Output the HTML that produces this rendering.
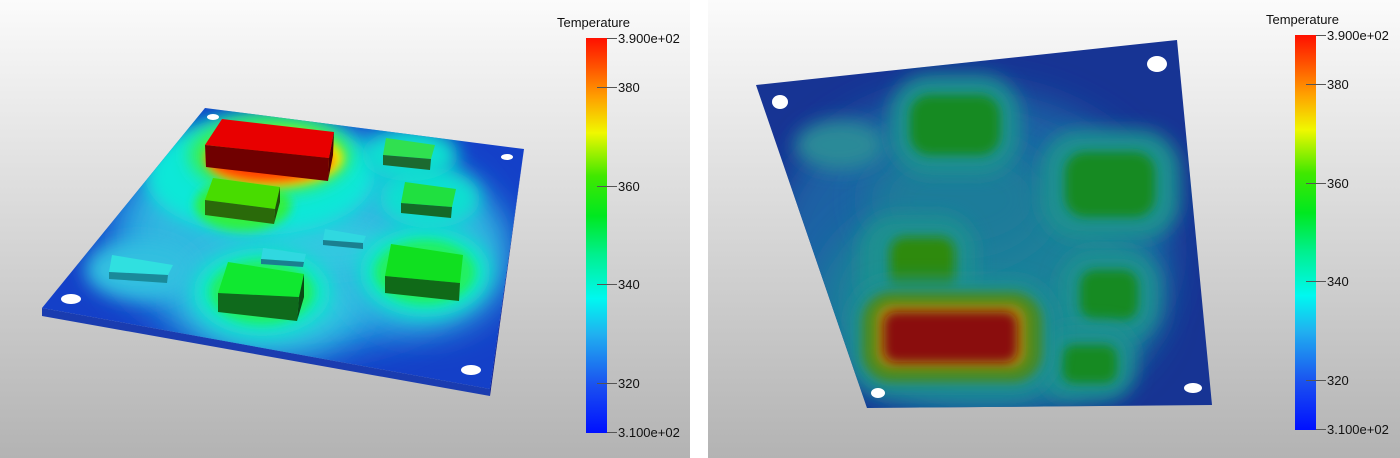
<!DOCTYPE html>
<html><head><style>
html,body{margin:0;padding:0;background:#fff;}
svg{display:block;font-family:"Liberation Sans",sans-serif;}
</style></head><body>
<svg width="1400" height="458" viewBox="0 0 1400 458" xmlns="http://www.w3.org/2000/svg">
<defs>
<linearGradient id="bg" x1="0" y1="0" x2="0" y2="1">
<stop offset="0" stop-color="#fbfbfb"/><stop offset="1" stop-color="#b3b3b3"/></linearGradient>
<linearGradient id="cb" x1="0" y1="1" x2="0" y2="0">
<stop offset="0" stop-color="#0010ff"/><stop offset="0.12" stop-color="#1a50f0"/>
<stop offset="0.25" stop-color="#20b0f0"/><stop offset="0.34" stop-color="#00f8f0"/>
<stop offset="0.45" stop-color="#00f090"/><stop offset="0.55" stop-color="#00e820"/>
<stop offset="0.65" stop-color="#40e800"/><stop offset="0.76" stop-color="#f0f800"/>
<stop offset="0.85" stop-color="#ffa000"/><stop offset="0.93" stop-color="#ff5000"/>
<stop offset="1" stop-color="#ff1000"/></linearGradient>
<filter id="b1" x="-50%" y="-50%" width="200%" height="200%"><feGaussianBlur stdDeviation="18"/></filter>
<filter id="b2" x="-50%" y="-50%" width="200%" height="200%"><feGaussianBlur stdDeviation="9"/></filter>
<filter id="b3" x="-50%" y="-50%" width="200%" height="200%"><feGaussianBlur stdDeviation="5"/></filter>
<clipPath id="lp"><polygon points="205,108 524,149 490,389 42,308"/></clipPath>
<clipPath id="rp"><polygon points="756,85 1177,40 1212,405 867,408"/></clipPath>
</defs>
<rect x="0" y="0" width="690" height="458" fill="url(#bg)"/>
<rect x="708" y="0" width="692" height="458" fill="url(#bg)"/>

<polygon points="42,308 490,389 490,396 42,316" fill="#1a3cb0"/>
<polygon points="524,149 490,389 490,396 523,156" fill="#0a1a90"/>
<polygon points="205,108 524,149 490,389 42,308" fill="#1440c8"/>
<g clip-path="url(#lp)">
<ellipse cx="300" cy="240" rx="190" ry="110" fill="#2090e0" filter="url(#b1)"/>
<ellipse cx="280" cy="230" rx="150" ry="90" fill="#30b8e0" filter="url(#b1)"/>
<ellipse cx="270" cy="300" rx="90" ry="55" fill="#30c8e0" filter="url(#b1)"/>
<ellipse cx="425" cy="255" rx="85" ry="75" fill="#30b8e0" filter="url(#b1)"/>
<ellipse cx="140" cy="270" rx="55" ry="30" fill="#30c0e0" filter="url(#b2)"/>
<ellipse cx="330" cy="245" rx="60" ry="25" fill="#30c8e0" filter="url(#b2)"/>
<ellipse cx="260" cy="175" rx="115" ry="60" fill="#10e8d8" filter="url(#b2)"/>
<ellipse cx="262" cy="292" rx="68" ry="44" fill="#10e8c8" filter="url(#b2)"/>
<ellipse cx="425" cy="272" rx="65" ry="45" fill="#10e8c8" filter="url(#b2)"/>
<ellipse cx="430" cy="198" rx="50" ry="30" fill="#10e0d0" filter="url(#b2)"/>
<ellipse cx="410" cy="155" rx="48" ry="26" fill="#10e0d0" filter="url(#b2)"/>
<ellipse cx="262" cy="292" rx="52" ry="32" fill="#20f060" filter="url(#b3)"/>
<ellipse cx="425" cy="272" rx="50" ry="32" fill="#20f060" filter="url(#b3)"/>
<ellipse cx="243" cy="205" rx="48" ry="26" fill="#30f040" filter="url(#b3)"/>
<ellipse cx="270" cy="155" rx="80" ry="38" fill="#40f040" filter="url(#b2)"/>
<ellipse cx="275" cy="158" rx="68" ry="28" fill="#ffe800" filter="url(#b3)"/>
<ellipse cx="270" cy="160" rx="62" ry="22" fill="#ff4000" filter="url(#b3)"/>
</g>
<ellipse cx="213" cy="117" rx="6" ry="3" fill="#fff"/>
<ellipse cx="507" cy="157" rx="6" ry="3" fill="#fff"/>
<ellipse cx="71" cy="299" rx="10" ry="5" fill="#fff"/>
<ellipse cx="471" cy="370" rx="10" ry="5" fill="#fff"/>

<g>
<polygon points="222,119 334,132 329,158 205,145" fill="#e80000"/>
<polygon points="205,145 329,158 328,181 206,167" fill="#700000"/>
<polygon points="334,132 329,158 328,181 333,155" fill="#500000"/>
<polygon points="213,178 280,187 275,209 205,200" fill="#48dc00"/>
<polygon points="205,200 275,209 274,224 205,215" fill="#2a6a0a"/>
<polygon points="280,187 275,209 274,224 280,202" fill="#1f5008"/>
<polygon points="386,138 435,145 431,159 383,155" fill="#30e050"/>
<polygon points="383,155 431,159 430,170 383,165" fill="#1c6a30"/>
<polygon points="405,182 456,189 452,207 401,203" fill="#20e040"/>
<polygon points="401,203 452,207 451,218 401,213" fill="#146a28"/>
<polygon points="391,244 463,255 460,283 385,276" fill="#10e020"/>
<polygon points="385,276 460,283 459,301 385,293" fill="#106a18"/>
<polygon points="228,262 304,274 299,297 218,293" fill="#10e830"/>
<polygon points="218,293 299,297 297,321 218,312" fill="#0f6a1c"/>
<polygon points="304,274 299,297 297,321 304,297" fill="#0a4a14"/>
<polygon points="112,255 173,265 168,275 109,272" fill="#30e0e0"/>
<polygon points="109,272 168,275 167,283 109,279" fill="#1a8a9a"/>
<polygon points="263,248 306,254 304,262 261,259" fill="#30d8e0"/>
<polygon points="261,259 304,262 303,267 261,264" fill="#1a8090"/>
<polygon points="325,229 366,236 363,243 323,240" fill="#30d8e0"/>
<polygon points="323,240 363,243 363,249 323,245" fill="#1a8090"/>
</g>

<polygon points="756,85 1177,40 1212,405 867,408" fill="#173494"/>
<g clip-path="url(#rp)">
<ellipse cx="970" cy="250" rx="200" ry="160" fill="#1c62a4" filter="url(#b1)"/>
<ellipse cx="990" cy="300" rx="170" ry="110" fill="#1a809a" filter="url(#b1)"/>
<ellipse cx="960" cy="200" rx="90" ry="60" fill="#1a7c9a" filter="url(#b1)"/>
<ellipse cx="840" cy="145" rx="45" ry="25" fill="#2a8a98" filter="url(#b2)"/>
<rect x="890" y="75" width="130" height="100" rx="40" fill="#1a9090" filter="url(#b2)"/>
<rect x="910" y="95" width="90" height="60" rx="20" fill="#128a22" filter="url(#b3)"/>
<rect x="1040" y="130" width="140" height="110" rx="40" fill="#1a9090" filter="url(#b2)"/>
<rect x="1065" y="152" width="90" height="65" rx="20" fill="#128a22" filter="url(#b3)"/>
<rect x="860" y="215" width="115" height="100" rx="35" fill="#1a9090" filter="url(#b2)"/>
<rect x="890" y="237" width="65" height="60" rx="15" fill="#2e8a10" filter="url(#b3)"/>
<rect x="1058" y="250" width="100" height="90" rx="35" fill="#1a9090" filter="url(#b2)"/>
<rect x="1080" y="270" width="58" height="50" rx="15" fill="#128a22" filter="url(#b3)"/>
<rect x="1040" y="325" width="95" height="75" rx="30" fill="#1a9090" filter="url(#b2)"/>
<rect x="1062" y="345" width="55" height="38" rx="12" fill="#128a22" filter="url(#b3)"/>
<rect x="850" y="280" width="205" height="115" rx="40" fill="#1a9090" filter="url(#b2)"/>
<rect x="862" y="292" width="180" height="90" rx="30" fill="#4a8a20" filter="url(#b3)"/>
<rect x="876" y="304" width="150" height="64" rx="16" fill="#a08a10" filter="url(#b3)"/>
<rect x="884" y="312" width="133" height="50" rx="12" fill="#8a1008" filter="url(#b3)"/>
</g>
<ellipse cx="780" cy="102" rx="8" ry="7" fill="#fff"/>
<ellipse cx="1157" cy="64" rx="10" ry="8" fill="#fff"/>
<ellipse cx="878" cy="393" rx="7" ry="5" fill="#fff"/>
<ellipse cx="1193" cy="388" rx="9" ry="5" fill="#fff"/>

<g font-size="13" fill="#111">
<text x="557" y="27">Temperature</text>
<rect x="586" y="38" width="21" height="395" fill="url(#cb)"/>
<g stroke="#555" stroke-width="1">
<line x1="607" y1="38.5" x2="617" y2="38.5"/><line x1="607" y1="432.5" x2="617" y2="432.5"/>
<line x1="597" y1="87.5" x2="617" y2="87.5"/><line x1="597" y1="186.5" x2="617" y2="186.5"/>
<line x1="597" y1="284.5" x2="617" y2="284.5"/><line x1="597" y1="383.5" x2="617" y2="383.5"/>
</g>
<text x="618" y="43">3.900e+02</text><text x="618" y="92">380</text>
<text x="618" y="191">360</text><text x="618" y="289">340</text>
<text x="618" y="388">320</text><text x="618" y="437">3.100e+02</text>
</g>
<g font-size="13" fill="#111">
<text x="1266" y="24">Temperature</text>
<rect x="1295" y="35" width="21" height="395" fill="url(#cb)"/>
<g stroke="#555" stroke-width="1">
<line x1="1316" y1="35.5" x2="1326" y2="35.5"/><line x1="1316" y1="429.5" x2="1326" y2="429.5"/>
<line x1="1306" y1="84.5" x2="1326" y2="84.5"/><line x1="1306" y1="183.5" x2="1326" y2="183.5"/>
<line x1="1306" y1="281.5" x2="1326" y2="281.5"/><line x1="1306" y1="380.5" x2="1326" y2="380.5"/>
</g>
<text x="1327" y="40">3.900e+02</text><text x="1327" y="89">380</text>
<text x="1327" y="188">360</text><text x="1327" y="286">340</text>
<text x="1327" y="385">320</text><text x="1327" y="434">3.100e+02</text>
</g>
</svg>
</body></html>
